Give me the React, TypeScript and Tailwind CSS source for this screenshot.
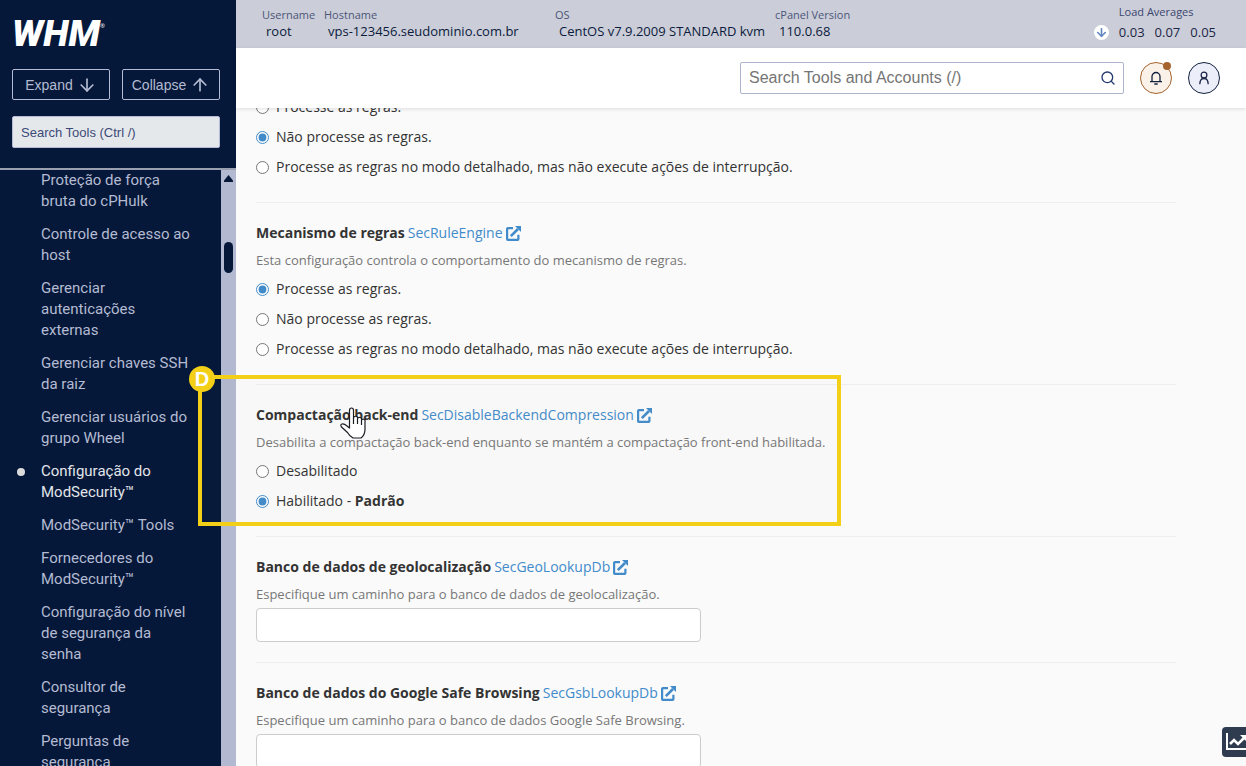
import React, { useState } from "react";
import { ArrowDown, ArrowUp, Search } from "lucide-react";

interface Option {
  label: string;
  note?: string;
}

interface Directive {
  title: string;
  directive: string;
  description: string;
  options?: Option[];
  selected?: number;
}

const tools = [
  "Proteção de força bruta do cPHulk",
  "Controle de acesso ao host",
  "Gerenciar autenticações externas",
  "Gerenciar chaves SSH da raiz",
  "Gerenciar usuários do grupo Wheel",
  "Configuração do ModSecurity™",
  "ModSecurity™ Tools",
  "Fornecedores do ModSecurity™",
  "Configuração do nível de segurança da senha",
  "Consultor de segurança",
  "Perguntas de segurança",
];

const ruleOptions: Option[] = [
  { label: "Processe as regras." },
  { label: "Não processe as regras." },
  { label: "Processe as regras no modo detalhado, mas não execute ações de interrupção." },
];

const directives: Directive[] = [
  {
    title: "Mecanismo de regras",
    directive: "SecRuleEngine",
    description: "Esta configuração controla o comportamento do mecanismo de regras.",
    options: ruleOptions,
    selected: 0,
  },
  {
    title: "Compactação back-end",
    directive: "SecDisableBackendCompression",
    description: "Desabilita a compactação back-end enquanto se mantém a compactação front-end habilitada.",
    options: [{ label: "Desabilitado" }, { label: "Habilitado - ", note: "Padrão" }],
    selected: 1,
  },
  {
    title: "Banco de dados de geolocalização",
    directive: "SecGeoLookupDb",
    description: "Especifique um caminho para o banco de dados de geolocalização.",
  },
  {
    title: "Banco de dados do Google Safe Browsing",
    directive: "SecGsbLookupDb",
    description: "Especifique um caminho para o banco de dados Google Safe Browsing.",
  },
];

function ExternalLinkIcon() {
  return (
    <svg viewBox="0 0 15 15" className="h-[15px] w-[15px]" aria-hidden="true">
      <path d="M7 2.2H1.8Q1.100 2.200 1.100 3V13.100Q1.100 13.900 1.800 13.900H11.600Q12.400 13.900 12.400 13.100V8.800" fill="none" stroke="currentColor" strokeWidth="2.200" />
      <path d="M4.800 10.200L12 3" fill="none" stroke="currentColor" strokeWidth="2.600" />
      <path d="M9 0H15V6Z" fill="currentColor" />
    </svg>
  );
}

function RadioList({ name, options, selected }: { name: string; options: Option[]; selected: number }) {
  const [value, setValue] = useState(selected);

  return (
    <div>
      {options.map((option, index) => (
        <label key={option.label} className="flex h-[30px] items-center gap-[7px] text-sm">
          <input
            type="radio"
            name={name}
            checked={value === index}
            onChange={() => setValue(index)}
            className="h-[13px] w-[13px] accent-[#428bca]"
          />
          <span>
            {option.label}
            {option.note && <b>{option.note}</b>}
          </span>
        </label>
      ))}
    </div>
  );
}

function DirectiveSection({ item }: { item: Directive }) {
  return (
    <section className="border-t border-[#eeeeee] pt-[18px] pb-5">
      <h2 className="flex h-6 items-center gap-[3px] text-sm font-bold">
        <label htmlFor={item.options ? undefined : item.directive}>{item.title}</label>
        <a href={"#" + item.directive} className="flex items-center gap-[3px] font-normal text-[#428bca]">
          {item.directive}
          <ExternalLinkIcon />
        </a>
      </h2>
      <p className="mt-[5px] mb-1 text-[13px] leading-5 text-[#777777]">{item.description}</p>
      {item.options ? (
        <RadioList name={item.directive} options={item.options} selected={item.selected ?? 0} />
      ) : (
        <input
          id={item.directive}
          type="text"
          className="block h-[34px] w-full max-w-[445px] rounded border border-[#cccccc] bg-white px-3 text-sm"
        />
      )}
    </section>
  );
}

function Sidebar() {
  return (
    <aside className="flex w-[236px] shrink-0 flex-col bg-[#051839] text-[#b4bbd2]">
      <div className="border-b-2 border-[#9aa0b0] pt-4 pr-4 pb-5 pl-3">
        <a href="#home" className="flex h-9 items-center text-white" aria-label="WHM home">
          <span className="font-['Roboto',sans-serif] text-[37px] leading-9 font-black italic">WHM</span>
          <span className="self-start pt-1 text-[6px] leading-3">®</span>
        </a>
        <div className="mt-[17px] flex gap-3 font-['Liberation_Sans',sans-serif] text-sm">
          <button type="button" className="flex h-[31px] flex-1 items-center justify-center gap-1 rounded-xs border border-[#b4bbd2]">
            Expand <ArrowDown size={20} strokeWidth={2} />
          </button>
          <button type="button" className="flex h-[31px] flex-1 items-center justify-center gap-1 rounded-xs border border-[#b4bbd2]">
            Collapse <ArrowUp size={20} strokeWidth={2} />
          </button>
        </div>
        <input
          type="text"
          aria-label="Search Tools"
          placeholder="Search Tools (Ctrl /)"
          className="mt-4 block h-8 w-full rounded-xs border border-[#b4bbd2] bg-[#e5e8eb] px-2 font-['Liberation_Sans',sans-serif] text-[13px] placeholder:text-[#3b4a77]"
        />
      </div>
      <div className="flex min-h-0 flex-1">
        <nav className="flex-1 overflow-hidden pr-7">
          <ul className="flex flex-col gap-3 font-['Roboto',sans-serif] text-[15px] leading-[21px]">
            {tools.map((tool) => {
              const active = tool.startsWith("Configuração do Mod");
              return (
                <li key={tool} className="flex">
                  <span className="flex h-[21px] w-[41px] shrink-0 items-center pl-[17px]">
                    {active && <span className="h-2 w-2 rounded-full bg-[#dcdcdc]" />}
                  </span>
                  <a href="#tool" className={active ? "text-[#e3e5ea]" : ""}>
                    {tool}
                  </a>
                </li>
              );
            })}
          </ul>
        </nav>
        <div className="flex w-[15px] flex-col items-center bg-[#b2b9d0] pt-[5px]">
          <svg viewBox="0 0 9 7" className="h-[7px] w-[9px]" aria-hidden="true">
            <path d="M4.5 0L9 5.5V7H0V5.5Z" fill="#051839" />
          </svg>
          <div className="mt-[60px] h-[31px] w-[9px] rounded-full bg-[#051839]" />
        </div>
      </div>
    </aside>
  );
}

function Stat({ label, value, width }: { label: string; value: string; width: string }) {
  return (
    <div className={width}>
      <div className="text-[11px] leading-4 text-[#4c5578]">{label}</div>
      <div className="pl-1 text-[13px] leading-4 text-[#0b1a3d]">{value}</div>
    </div>
  );
}

function StatusBar() {
  return (
    <div className="flex h-12 shrink-0 bg-[#cbced8] pt-[7px] pr-[30px] pl-[26px] whitespace-nowrap">
      <Stat label="Username" value="root" width="w-[62px]" />
      <Stat label="Hostname" value="vps-123456.seudominio.com.br" width="w-[231px]" />
      <Stat label="OS" value="CentOS v7.9.2009 STANDARD kvm" width="w-[220px]" />
      <Stat label="cPanel Version" value="110.0.68" width="w-[90px]" />
      <div className="ml-auto flex items-end gap-[10px] pb-2">
        <span className="flex h-[15px] w-[15px] items-center justify-center rounded-full bg-white text-[#5f86bd]">
          <ArrowDown size={13} strokeWidth={3} />
        </span>
        <div>
          <div className="text-[11px] leading-4 text-[#3b4570]">Load Averages</div>
          <div className="flex gap-[10px] pt-1 text-[13px] leading-4 text-[#1b2547]">
            <span>0.03</span>
            <span>0.07</span>
            <span>0.05</span>
          </div>
        </div>
      </div>
    </div>
  );
}

function Header() {
  return (
    <header className="relative flex h-[60px] shrink-0 items-center justify-end gap-4 bg-white pr-[26px] shadow-[0_1px_4px_rgba(0,0,0,0.12)]">
      <div className="flex h-8 w-96 items-center rounded-xs border border-[#adb5cd] bg-white pr-[7px] pl-2">
        <input
          type="text"
          aria-label="Search Tools and Accounts"
          placeholder="Search Tools and Accounts (/)"
          className="min-w-0 flex-1 font-['Liberation_Sans',sans-serif] text-base outline-none placeholder:text-[#757575]"
        />
        <button type="button" aria-label="Search" className="text-[#22386f]">
          <Search size={16} strokeWidth={2} />
        </button>
      </div>
      <button type="button" aria-label="Notifications" className="relative flex h-8 w-8 items-center justify-center rounded-full border border-[#a5632f] bg-[#faf2e8]">
        <svg viewBox="0 0 14 14" className="h-[14px] w-[14px]" fill="none" stroke="#14203f" strokeWidth="1.3" aria-hidden="true">
          <path d="M3 10.5V5.500a4 4 0 0 1 8 0V10.500M1 10.700H13M5.300 13H8.700" />
        </svg>
        <span className="absolute -top-px right-0 h-2 w-2 rounded-full bg-[#a5632f]" />
      </button>
      <button type="button" aria-label="Account" className="flex h-8 w-8 items-center justify-center rounded-full border border-[#14203f] bg-[#eceffa]">
        <svg viewBox="0 0 14 14" className="h-[14px] w-[14px]" fill="none" stroke="#14203f" strokeWidth="1.2" aria-hidden="true">
          <circle cx="7" cy="4" r="2.900" />
          <path d="M2.800 13.200Q2.800 9.200 5.300 7.600M11.200 13.200Q11.200 9.200 8.700 7.600M4.600 8.300Q7 7 9.400 8.300" />
        </svg>
      </button>
    </header>
  );
}

// Tutorial marker drawn over the page
function Callout() {
  return (
    <div className="pointer-events-none absolute top-[375px] left-[198px] h-[151px] w-[643px] border-4 border-[#f3d017] bg-[#808080]/2">
      <span className="absolute -top-[13px] -left-[13px] flex h-[26px] w-[26px] items-center justify-center rounded-full bg-[#f3d017] font-['Liberation_Sans',sans-serif] text-xl font-bold text-white">
        D
      </span>
      <svg viewBox="0 0 26 32" className="absolute top-7 left-[138px] h-8 w-[26px]" aria-hidden="true">
        <path
          d="M9.500 18V3.500Q9.500 1 11.500 1T13.500 3.500V11Q14 9 16 9.300T17.500 11.500Q18 10 20 10.500T21.500 13Q22.500 11.500 24 12.300T25 15V22Q25 28 21 31H13Q9.500 29 7.500 25.500L1.500 20Q0 17.500 2 17Q4 16.500 7 19L9.500 21Z"
          fill="white"
          stroke="#1c1c24"
          strokeWidth="1.2"
          strokeLinejoin="round"
        />
        <path d="M13.500 11V17M17.500 12V17M21.500 13V18" stroke="#1c1c24" strokeWidth="1.2" />
      </svg>
    </div>
  );
}

export default function App() {
  return (
    <div className="relative flex h-screen overflow-hidden bg-[#fafafa] font-['Open_Sans',sans-serif] text-[#333333]">
      <Sidebar />
      <div className="flex min-w-0 flex-1 flex-col">
        <StatusBar />
        <Header />
        <main className="min-h-0 flex-1 overflow-hidden pr-[70px] pl-5">
          <div className="-mt-4 pb-5">
            <RadioList name="SecAuditEngine" options={ruleOptions} selected={1} />
          </div>
          {directives.map((item) => (
            <DirectiveSection key={item.directive} item={item} />
          ))}
        </main>
      </div>
      <Callout />
      <button type="button" aria-label="Statistics" className="absolute right-0 bottom-[9px] flex h-[30px] w-6 items-center overflow-hidden rounded-l bg-[#2f3b4f] pl-1 text-white">
        <svg viewBox="0 0 22 18" className="h-[18px] w-[22px] shrink-0" fill="none" stroke="currentColor" aria-hidden="true">
          <path d="M1 0V16H22" strokeWidth="2" />
          <path d="M4 11L8 7L12 11L18 5" strokeWidth="2.5" />
          <path d="M14 2H21V9Z" fill="currentColor" stroke="none" />
        </svg>
      </button>
    </div>
  );
}
